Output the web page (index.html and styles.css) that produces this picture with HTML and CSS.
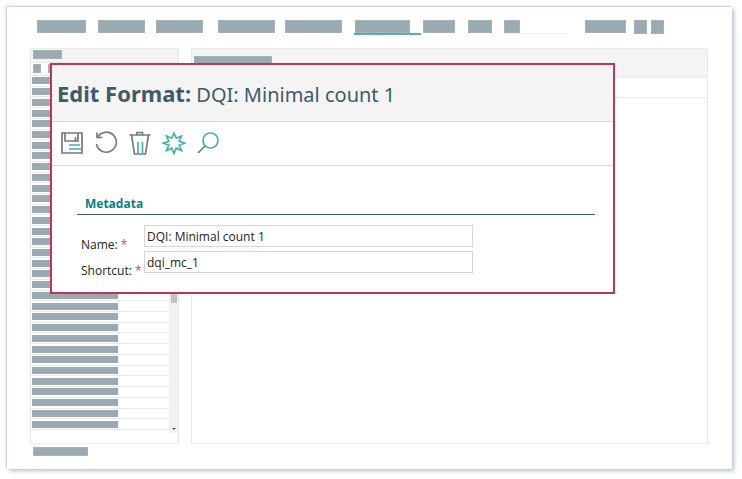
FILE: index.html
```html
<!DOCTYPE html>
<html lang="en">
<head>
    <meta charset="UTF-8">
    <meta name="viewport" content="width=device-width, initial-scale=1.0">
    <title>Edit Format</title>
    <link rel="stylesheet" href="styles.css">
</head>
<body>
    <div class="window">
        <!-- Top navigation -->
        <nav class="nav">
            <span class="bar w-49"></span>
            <span class="bar w-47"></span>
            <span class="bar w-47"></span>
            <span class="bar w-57"></span>
            <span class="bar w-57"></span>
            <span class="active"><span class="bar w-55"></span></span>
            <span class="bar w-32"></span>
            <span class="bar w-24"></span>
            <span class="search"><span class="bar w-16"></span></span>
            <span class="bar w-41"></span>
            <span class="bar square"></span>
            <span class="bar square"></span>
        </nav>

        <main class="panels">
            <!-- Left list -->
            <section class="panel side">
                <div class="side-head"><span class="bar small w-29"></span></div>
                <div class="side-tools">
                    <span class="bar small w-8"></span>
                    <span class="bar small w-8"></span>
                </div>
                <div class="side-body">
                    <ul class="list">
                        <li></li><li></li><li></li><li></li><li></li><li></li>
                        <li></li><li></li><li></li><li></li><li></li><li></li>
                        <li></li><li></li><li></li><li></li><li></li><li></li>
                        <li></li><li></li><li></li><li></li><li></li><li></li>
                        <li></li><li></li><li></li><li></li><li></li><li></li>
                        <li></li><li></li><li></li>
                    </ul>
                    <div class="scrollbar">
                        <span class="thumb"></span>
                        <span class="arrow"></span>
                    </div>
                </div>
            </section>

            <!-- Right content -->
            <section class="panel content">
                <div class="content-head"><span class="bar w-78"></span></div>
                <div class="content-row"></div>
            </section>
        </main>

        <footer class="footer"><span class="bar small w-55"></span></footer>

        <!-- Edit dialog -->
        <form class="dialog">
            <h1><strong>Edit Format:</strong> DQI: Minimal count 1</h1>
            <div class="toolbar">
                <button type="button" aria-label="Save">
                    <svg viewBox="0 0 24 24">
                        <path class="gray" d="M2 2H22V22H2ZM5 2V10H18V2M15.500 6V10"/>
                        <path class="teal" d="M9 14H20M9 18H22"/>
                    </svg>
                </button>
                <button type="button" aria-label="Undo">
                    <svg viewBox="0 0 24 24">
                        <path class="gray" d="M3 1.500V6.500H8M3.500 6.500A10 10 0 1 1 2.500 13"/>
                    </svg>
                </button>
                <button type="button" aria-label="Delete">
                    <svg viewBox="0 0 24 24">
                        <path class="gray" d="M1.500 4H22.500M9 4V1.500H14.500V4M3.500 4L6.500 23H17.500L20.500 4"/>
                        <path class="teal" d="M10 11V22M14.500 11V22"/>
                    </svg>
                </button>
                <button type="button" aria-label="Execute">
                    <svg viewBox="0 0 24 24">
                        <path class="teal" d="M12 2L14.200 7.200L19.500 5L17.200 10.200L22.500 12.200L17.200 14.200L19.500 19.500L14.200 17.200L12 22.500L9.800 17.200L4.500 19.500L6.800 14.200L1.500 12.200L6.800 10.200L4.500 5L9.800 7.200Z"/>
                    </svg>
                </button>
                <button type="button" aria-label="Search">
                    <svg viewBox="0 0 24 24">
                        <circle class="teal" cx="14.500" cy="9.500" r="7.500"/>
                        <path class="gray" d="M9 15L2 22"/>
                    </svg>
                </button>
            </div>
            <fieldset>
                <legend>Metadata</legend>
                <div class="field">
                    <label for="name">Name: <span class="required">*</span></label>
                    <input type="text" id="name" value="DQI: Minimal count 1">
                </div>
                <div class="field">
                    <label for="shortcut">Shortcut: <span class="required">*</span></label>
                    <input type="text" id="shortcut" value="dqi_mc_1">
                </div>
            </fieldset>
        </form>
    </div>
</body>
</html>
```
FILE: styles.css
```css
* {
    box-sizing: border-box;
}
body {
    font-family: 'Open Sans', sans-serif;
    font-size: 12px;
    color: #222;
    background-color: #fff;
    display: flex;
    min-height: 100vh;
    margin: 0;
    padding: 7px 10px 10px 7px;
}
.window {
    position: relative;
    flex: 1;
    display: flex;
    flex-direction: column;
    background-color: #fff;
    box-shadow: 2px 2px 4px #b4c2c8, -1px -1px 2px #c3ced2;
}

/* placeholder bars */
.bar {
    display: block;
    height: 13px;
    background-color: #9aaab0;
    border: 1px solid #a5b3b8;
}
.small {
    height: 9px;
}
.w-8 { width: 8px; }
.w-16 { width: 16px; }
.w-24 { width: 24px; }
.w-29 { width: 29px; }
.w-32 { width: 32px; }
.w-41 { width: 41px; }
.w-47 { width: 47px; }
.w-49 { width: 49px; }
.w-55 { width: 55px; }
.w-57 { width: 57px; }
.w-78 { width: 78px; }
.square {
    width: 13px;
    height: 14px;
}

.nav {
    display: grid;
    grid-template-columns: 61fr 58fr 62fr 67fr 69fr 69fr 45fr 36fr 81fr 49fr 17fr 13fr;
    align-items: start;
    padding: 13px 68px 0 30px;
    height: 41px;
}
.active {
    width: 67px;
    padding: 0 0 0 1px;
    height: 15px;
    border-bottom: 2px solid #5aaeb0;
}
.search {
    width: 63px;
    border-bottom: 1px solid #eee;
}

.panels {
    flex: 1;
    display: grid;
    grid-template-columns: 149fr 517fr;
    gap: 12px;
    padding: 0 24px 0 23px;
}
.panel {
    display: flex;
    flex-direction: column;
    border: 1px solid #e9e9e9;
}
.side-head {
    height: 14px;
    padding: 1px 2px;
    background-color: #f4f4f4;
    border-bottom: 1px solid #e9e9e9;
}
.side-tools {
    display: flex;
    gap: 7px;
    height: 13px;
    padding: 1px 2px;
    border-bottom: 1px solid #e9e9e9;
}
.side-body {
    flex: 1;
    display: flex;
    margin-bottom: 10px;
}
.list {
    flex: 1;
    display: grid;
    grid-auto-rows: 1fr;
    list-style: none;
    margin: 0 0 3px;
    padding: 0;
}
.list li {
    display: flex;
    align-items: center;
    padding-left: 1px;
    border-bottom: 1px solid #e9e9e9;
}
.list li::before {
    content: "";
    width: 86px;
    height: 7px;
    background-color: #9aaab0;
}
.scrollbar {
    display: flex;
    flex-direction: column;
    justify-content: space-between;
    align-items: center;
    width: 9px;
    padding-bottom: 3px;
    background-color: #f1f1f1;
}
.thumb {
    width: 6px;
    height: 64%;
    background-color: #c1c1c1;
}
.arrow {
    border: 2px solid transparent;
    border-top-color: #555;
    border-bottom: 0;
}
.content-head {
    height: 29px;
    padding: 7px 2px;
    background-color: #f4f4f4;
    border-bottom: 2px solid #eee;
}
.content-row {
    height: 20px;
    border-bottom: 1px solid #e9e9e9;
}
.footer {
    height: 25px;
    padding: 3px 26px;
}

/* dialog over the page */
.dialog {
    position: absolute;
    top: 56px;
    left: 43px;
    right: 117px;
    background-color: #fff;
    border: 2px solid #bf3459;
}
h1 {
    margin: 0;
    padding: 14px 5px 10px;
    font-family: 'Noto Sans', sans-serif;
    font-size: 20px;
    line-height: 32px;
    font-weight: 400;
    color: #425968;
    background-color: #f4f4f4;
    border-bottom: 1px solid #d8d8d8;
}
h1 strong {
    font-size: 22px;
    line-height: 20px;
}
.toolbar {
    display: flex;
    gap: 10px;
    padding: 9px 8px 10px;
    border-bottom: 1px solid #d8d8d8;
}
.toolbar button {
    width: 24px;
    height: 24px;
    padding: 0;
    border: none;
    background: none;
    cursor: pointer;
}
.toolbar svg {
    display: block;
    width: 24px;
    height: 24px;
    fill: none;
    stroke-width: 1.7;
}
.gray {
    stroke: #7a7a7a;
}
.teal {
    stroke: #4aafaf;
}
fieldset {
    margin: 28px 18px 15px 25px;
    padding: 0;
    border: none;
}
legend {
    width: 100%;
    margin-bottom: 10px;
    padding: 0 8px;
    font-weight: 700;
    line-height: 20px;
    color: #0b7f7f;
    border-bottom: 1px solid #425968;
}
.field {
    display: grid;
    grid-template-columns: 63px minmax(0, 329px);
    padding-left: 4px;
    margin-bottom: 4px;
}
.field label {
    padding-top: 11px;
    line-height: 18px;
    height: 22px;
    white-space: nowrap;
}
.required {
    color: #d4500f;
}
input[type="text"] {
    width: 100%;
    height: 22px;
    padding: 0 2px;
    font-family: inherit;
    font-size: 12px;
    color: #222;
    background-color: #fff;
    border: 1px solid #d5d5d5;
}
```
